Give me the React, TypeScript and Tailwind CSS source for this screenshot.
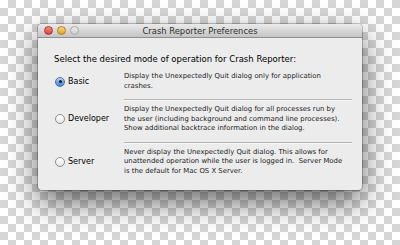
const rows = [
  {
    id: "basic",
    label: "Basic",
    selected: true,
    text: ["Display the Unexpectedly Quit dialog only for application", "crashes."],
  },
  {
    id: "developer",
    label: "Developer",
    selected: false,
    text: [
      "Display the Unexpectedly Quit dialog for all processes run by",
      "the user (including background and command line processes).",
      "Show additional backtrace information in the dialog.",
    ],
  },
  {
    id: "server",
    label: "Server",
    selected: false,
    text: [
      "Never display the Unexpectedly Quit dialog. This allows for",
      "unattended operation while the user is logged in.  Server Mode",
      "is the default for Mac OS X Server.",
    ],
  },
];

function Radio({ on }: { on: boolean }) {
  if (on) {
    return (
      <div className="w-[10px] h-[10px] rounded-full border border-[#4f6f99] bg-gradient-to-b from-[#c4dcf5] via-[#6fa6e4] to-[#3f86d8] flex items-center justify-center shrink-0">
        <div className="w-[3px] h-[3px] rounded-full bg-[#14233a]" />
      </div>
    );
  }
  return (
    <div className="w-[10px] h-[10px] rounded-full border border-[#8e8e8e] bg-gradient-to-b from-[#ffffff] to-[#e6e6e6] shrink-0" />
  );
}

export default function App() {
  return (
    <div className="w-[400px] h-[245px] overflow-hidden pt-[24px] pl-[38px] bg-[#ffffff] bg-[conic-gradient(#d6d6d6_25%,#ffffff_0_50%,#d6d6d6_0_75%,#ffffff_0)] bg-[length:16px_16px]">
      <div
        className="w-[324px] h-[166px] flex flex-col rounded-[4px] bg-[#ececec] overflow-hidden shadow-[0_0_0_1px_rgba(0,0,0,0.22),0_12px_30px_rgba(0,0,0,0.6)]"
        style={{ fontFamily: '"DejaVu Sans", Verdana, sans-serif' }}
      >
        {/* title bar */}
        <div className="h-[14px] shrink-0 grid grid-cols-[1fr_auto_1fr] items-center bg-gradient-to-b from-[#eaeaea] to-[#c4c4c4] border-b border-[#8f8f8f]">
          <div className="flex items-center gap-[4px] pl-[6px]">
            <div className="w-[9px] h-[9px] rounded-full border border-[#a8352f] bg-gradient-to-b from-[#f48a82] to-[#d8413a]" />
            <div className="w-[9px] h-[9px] rounded-full border border-[#b07e20] bg-gradient-to-b from-[#f8d97a] to-[#dda126]" />
            <div className="w-[9px] h-[9px] rounded-full border border-[#a9a9a9] bg-gradient-to-b from-[#ececec] to-[#cdcdcd]" />
          </div>
          <span className="text-[8.4px] leading-[10px] text-[#2d2d2d]">Crash Reporter Preferences</span>
          <div />
        </div>

        {/* content */}
        <div className="flex flex-col pl-[16px] pr-[10px] pt-[16px] text-black">
          <div className="text-[8.5px] leading-[10px]">Select the desired mode of operation for Crash Reporter:</div>

          {rows.map((row, i) => (
            <div key={row.id} className="flex flex-col">
              {i > 0 && (
                <div className="ml-[70px] w-[228px] h-[2px] border-t border-[#b4b4b4] border-b border-b-[#f8f8f8]" />
              )}
              <div
                className={
                  i === 0
                    ? "flex items-center pt-[8px] pb-[8px]"
                    : i === 1
                    ? "flex items-center pt-[4px] pb-[8px]"
                    : "flex items-center pt-[4px]"
                }
              >
                <div className="w-[70px] shrink-0 flex items-center gap-[3px] pl-[1px]">
                  <Radio on={row.selected} />
                  <span className="text-[8px] leading-[10px]">{row.label}</span>
                </div>
                <div className="flex flex-col text-[6.9px] leading-[9.5px] text-[#1a1a1a]">
                  {row.text.map((t) => (
                    <span key={t} className="whitespace-pre">{t}</span>
                  ))}
                </div>
              </div>
            </div>
          ))}
        </div>
      </div>
    </div>
  );
}
